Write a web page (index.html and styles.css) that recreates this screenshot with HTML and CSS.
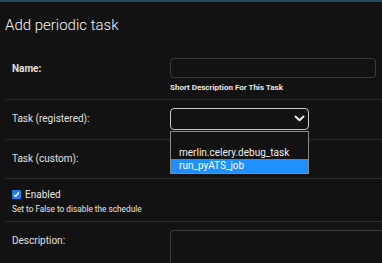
FILE: index.html
```html
<!DOCTYPE html>
<html>
<head>
<meta charset="utf-8">
<link rel="stylesheet" href="styles.css">
</head>
<body>
<div class="topbar"></div>
<div class="content">
  <h1 class="title">Add periodic task</h1>
  <div class="form">
    <div class="row first">
      <label class="label bold tall">Name:</label>
      <div class="field">
        <div class="input"></div>
        <div class="help bold">Short Description For This Task</div>
      </div>
    </div>
    <div class="row">
      <label class="label tall">Task (registered):</label>
      <div class="field">
        <div class="select">
          <svg class="chev" width="11" height="7" viewBox="0 0 11 7"><path d="M1.5 1.5 L5.5 5.3 L9.5 1.5" fill="none" stroke="#ececec" stroke-width="2" stroke-linecap="round" stroke-linejoin="round"/></svg>
          <div class="dropdown">
            <div class="opt"></div>
            <div class="opt mid">merlin.celery.debug_task</div>
            <div class="opt sel">run_pyATS_job</div>
          </div>
        </div>
      </div>
    </div>
    <div class="row custom">
      <label class="label">Task (custom):</label>
      <div class="field"></div>
    </div>
    <div class="row check-row">
      <div class="check-line">
        <span class="checkbox"><svg width="9" height="9" viewBox="0 0 9 9"><path d="M2.2 4.8 L3.8 6.4 L6.9 2.4" fill="none" stroke="#fff" stroke-width="1.4"/></svg></span>
        <span class="check-label">Enabled</span>
      </div>
      <div class="help2">Set to False to disable the schedule</div>
    </div>
    <div class="row last">
      <label class="label tall">Description:</label>
      <div class="field"><div class="textarea"></div></div>
    </div>
  </div>
</div>
</body>
</html>
```
FILE: styles.css
```css
html, body {
  margin: 0;
  padding: 0;
  background: #121212;
  color: #eeeeee;
  font-family: Roboto, "Liberation Sans", sans-serif;
  overflow: hidden;
  height: 263px;
}
.topbar {
  height: 2px;
  background: #264b5d;
}
.content {
  padding: 0 0 0 5px;
}
.title {
  margin: 0;
  padding: 14px 0 0 0;
  height: 48px;
  box-sizing: border-box;
  font-size: 15px;
  font-weight: 300;
  line-height: 18px;
  color: #f5f5f5;
}
.form {
  margin: 0;
}
.row {
  display: flex;
  border-bottom: 1px solid #2b2b2b;
  padding: 8px 0 9px 7px;
  min-height: 21px;
}
.row.first { padding-bottom: 6px; }
.row.custom { padding-top: 9px; padding-bottom: 8px; }
.row.last { border-bottom: none; padding-bottom: 0; }
.label {
  width: 158px;
  flex: none;
  font-size: 10px;
  line-height: 20px;
  color: #e0e0e0;
}
.label.tall { line-height: 22px; }
.bold { font-weight: 700; }
.field {
  flex: 1;
  display: flex;
  flex-direction: column;
}
.input {
  width: 204px;
  height: 18px;
  border: 1px solid #3a3a3a;
  border-radius: 4px;
}
.help {
  font-size: 8px;
  line-height: 10px;
  margin-top: 5px;
  color: #e8e8e8;
}
.select {
  position: relative;
  width: 137px;
  height: 20px;
  border: 1px solid #c8c8c8;
  border-radius: 4px;
}
.chev {
  position: absolute;
  right: 3px;
  top: 6px;
}
.dropdown {
  position: absolute;
  left: -1px;
  top: 22px;
  width: 137px;
  border: 1px solid #8a8a8a;
  background: #121212;
  z-index: 2;
}
.opt {
  height: 14px;
  font-size: 10px;
  line-height: 14px;
  padding-left: 8px;
  color: #f0f0f0;
}
.opt.mid { height: 13px; line-height: 13px; }
.opt.sel {
  background: #1e90ff;
  color: #ffffff;
}
.check-row {
  flex-direction: column;
  padding-top: 8px;
  padding-bottom: 7px;
}
.check-line {
  display: flex;
  align-items: center;
  height: 14px;
}
.checkbox {
  width: 9px;
  height: 9px;
  background: #1e7ef0;
  border-radius: 1px;
  display: inline-flex;
}
.check-label {
  font-size: 10px;
  margin-left: 4px;
  color: #e8e8e8;
}
.help2 {
  font-size: 8.25px;
  margin-top: 3px;
  line-height: 10px;
  color: #e8e8e8;
}
.textarea {
  height: 32px;
  border: 1px solid #3a3a3a;
  border-right: none;
  border-bottom: none;
  border-radius: 4px 0 0 0;
}
```
